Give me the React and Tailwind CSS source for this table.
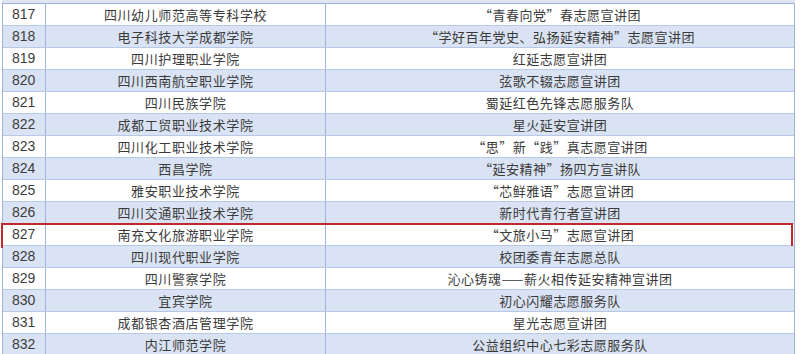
import React from "react";

const rows = [
  ["817", "四川幼儿师范高等专科学校", "“青春向党”春志愿宣讲团"],
  ["818", "电子科技大学成都学院", "“学好百年党史、弘扬延安精神”志愿宣讲团"],
  ["819", "四川护理职业学院", "红延志愿宣讲团"],
  ["820", "四川西南航空职业学院", "弦歌不辍志愿宣讲团"],
  ["821", "四川民族学院", "蜀延红色先锋志愿服务队"],
  ["822", "成都工贸职业技术学院", "星火延安宣讲团"],
  ["823", "四川化工职业技术学院", "“思”新“践”真志愿宣讲团"],
  ["824", "西昌学院", "“延安精神”扬四方宣讲队"],
  ["825", "雅安职业技术学院", "“芯鲜雅语”志愿宣讲团"],
  ["826", "四川交通职业技术学院", "新时代青行者宣讲团"],
  ["827", "南充文化旅游职业学院", "“文旅小马”志愿宣讲团"],
  ["828", "四川现代职业学院", "校团委青年志愿总队"],
  ["829", "四川警察学院", "沁心铸魂——薪火相传延安精神宣讲团"],
  ["830", "宜宾学院", "初心闪耀志愿服务队"],
  ["831", "成都银杏酒店管理学院", "星光志愿宣讲团"],
  ["832", "内江师范学院", "公益组织中心七彩志愿服务队"],
];

const cjk = { fontFamily: '"Noto Sans CJK SC", "Noto Sans", sans-serif' };
const num = { fontFamily: '"Liberation Sans", Arial, sans-serif' };

export default function App() {
  return (
    <div className="w-[800px] h-[354px] overflow-hidden bg-white">
      <div className="h-[3px] bg-[#dfe6f3] ml-[2px] w-[793px]" />
      <div className="ml-[2px] w-[793px] border-l border-r border-t border-[#9db3de]">
        {rows.map((r, i) => (
          <div
            key={r[0]}
            className={
              "relative flex h-[22px] border-b border-[#b7c8e8] " +
              (i % 2 === 1 ? "bg-[#dae3f3]" : "bg-white")
            }
          >
            <div
              className="w-[43px] shrink-0 border-r border-[#9db3de] pl-[9px] flex items-center text-[14px] text-[#3d3d3d]"
              style={num}
            >
              {r[0]}
            </div>
            <div
              className="w-[280px] shrink-0 border-r border-[#9db3de] flex items-center justify-center text-[13px] tracking-[0.6px] text-[#3a3a3a]"
              style={cjk}
            >
              {r[1]}
            </div>
            <div
              className="flex-1 flex items-center justify-center text-[13px] tracking-[0.5px] text-[#3a3a3a]"
              style={cjk}
            >
              {r[2]}
            </div>
            {r[0] === "827" && (
              <div className="absolute left-[-2px] right-[1px] top-[-1px] bottom-[-3px] border-2 border-[#c2272d]" />
            )}
          </div>
        ))}
      </div>
    </div>
  );
}
